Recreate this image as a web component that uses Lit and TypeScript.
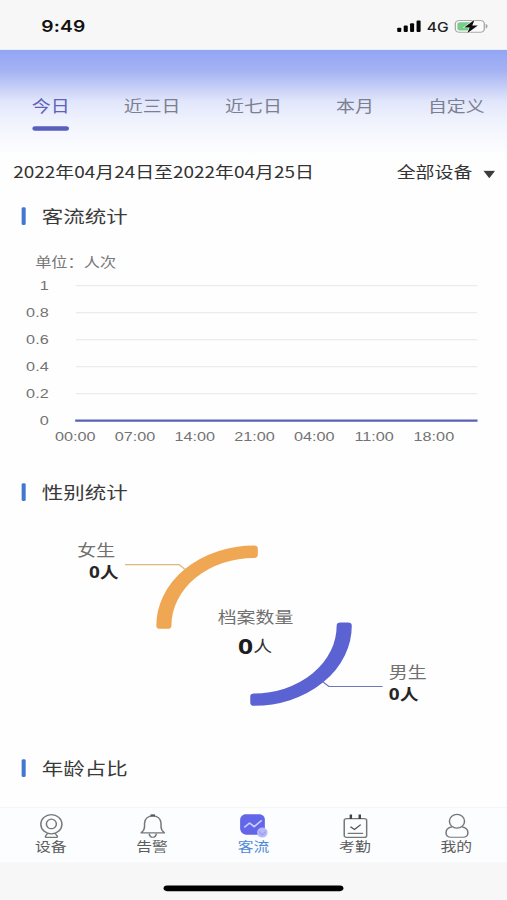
import { LitElement, html, svg, css } from "lit";
import { customElement, property } from "lit/decorators.js";
import { classMap } from "lit/directives/class-map.js";

@customElement("status-bar")
class StatusBar extends LitElement {
  static styles = css`
    :host { display: flex; justify-content: space-between; height: 44.6px; background: #f7f7f7; color: #111; }
    .time { padding: 15px 0 0 30.6px; font: 600 14.2px/18px Inter, sans-serif; letter-spacing: 0.1px; }
    .right { display: block; width: 85px; height: 44px; }
    .net { font: 500 12px Inter, sans-serif; fill: #222; }
  `;
  render() {
    return html`
      <div class="time">9:49</div>
      <svg class="right" viewBox="290 0 85 44">
        <g fill="#050505">
          <rect x="293.8" y="25" width="3" height="3.8" rx=".8" />
          <rect x="298.6" y="23" width="3" height="5.8" rx=".8" />
          <rect x="303.3" y="21" width="3" height="7.8" rx=".8" />
          <rect x="308.1" y="18.6" width="3" height="10.2" rx=".8" />
        </g>
        <text class="net" x="315.6" y="28.6" textLength="16.2" lengthAdjust="spacingAndGlyphs">4G</text>
        <rect x="336.8" y="18.5" width="21.4" height="10.6" rx="3" fill="#fbfbfb" stroke="#a9aba9" />
        <rect x="338.3" y="20" width="11" height="7.6" rx="1.6" fill="#75cf89" />
        <path d="M359.6 22 q1.6 1.6 0 3.4z" fill="#a0a0a0" stroke="#a0a0a0" stroke-width=".7" />
        <path d="M351 17.8 343.4 24.7h4l-1.8 5.4 7.8-7.2h-4.1z" fill="#111" stroke="#f4faf4" stroke-width=".9" paint-order="stroke" />
      </svg>
    `;
  }
}

@customElement("section-title")
class SectionTitle extends LitElement {
  @property() text = "";
  static styles = css`
    :host { display: flex; align-items: center; height: 24px; padding-left: 15.6px; gap: 12.3px; }
    .mark { width: 3px; height: 16px; margin-top: 1px; border-radius: 1.2px; background: #4478d0; }
    .label { font-size: 15.9px; line-height: 24px; color: #3a3a3a; }
  `;
  render() {
    return html`<span class="mark"></span><span class="label">${this.text}</span>`;
  }
}

@customElement("flow-chart")
class FlowChart extends LitElement {
  static styles = css`
    :host { display: block; }
    svg { display: block; }
    .axis { font: 12px "Liberation Sans", sans-serif; fill: #737373; }
    .unit { font: 12px "Noto Sans CJK SC", sans-serif; fill: #777; }
  `;
  render() {
    const levels = ["1", "0.8", "0.6", "0.4", "0.2", "0"];
    const hours = ["00:00", "07:00", "14:00", "21:00", "04:00", "11:00", "18:00"];
    return html`
      <svg width="375" height="225" viewBox="0 207 375 225">
        <text class="unit" x="26" y="240.9">单位：人次</text>
        ${levels.map((t, i) => svg`
          <text class="axis" text-anchor="end" x="36" y=${261.8 + i * 24.36}>${t}</text>
          <line x1="56" x2="353" y1=${257.8 + i * 24.36} y2=${257.8 + i * 24.36} stroke="#e6e6e6" />
        `)}
        <line x1="55.6" x2="353.2" y1="379.5" y2="379.5" stroke="#5a61b8" stroke-width="2" />
        ${hours.map((t, i) => svg`
          <text class="axis" text-anchor="middle" x=${55.7 + i * 44.2} y="397.8">${t}</text>
        `)}
      </svg>
    `;
  }
}

@customElement("gender-chart")
class GenderChart extends LitElement {
  static styles = css`
    :host { display: block; }
    svg { display: block; font-family: "Noto Sans CJK SC", sans-serif; }
    .name { font-size: 14px; fill: #707070; }
    .count { font-size: 14px; font-weight: 700; fill: #262626; }
    .total { font-family: "Open Sans", "Noto Sans CJK SC", sans-serif; font-size: 19.5px; font-weight: 700; fill: #1c1c1c; }
    .suffix { font-size: 14px; fill: #333; }
    .num { font-family: "Open Sans", sans-serif; }
  `;
  render() {
    return html`
      <svg width="375" height="225" viewBox="0 456 375 225">
        <path d="M118.4 564.5A69.5 69.5 0 0 1 187.9 495V500.6A63.9 63.9 0 0 0 124 564.5Z" fill="#f0a754" stroke="#f0a754" stroke-width="5.6" stroke-linejoin="round" />
        <path d="M257.4 564.5A69.5 69.5 0 0 1 187.9 634V628.4A63.9 63.9 0 0 0 251.8 564.5Z" fill="#5b63d3" stroke="#5b63d3" stroke-width="5.6" stroke-linejoin="round" />
        <path d="M92.5 509.4H132.5L137 514" fill="none" stroke="#ddb67c" />
        <path d="M238.6 615L243.2 619.4H283" fill="none" stroke="#7276bd" />
        <text class="name" x="57.2" y="501.6">女生</text>
        <text class="count" x="65.8" y="521.9"><tspan class="num">0</tspan>人</text>
        <text class="name" x="161" y="562">档案数量</text>
        <text class="total" x="176" y="590.4">0</text>
        <text class="suffix" x="187.4" y="588.4">人</text>
        <text class="name" x="287.6" y="611.8">男生</text>
        <text class="count" x="287.6" y="632"><tspan class="num">0</tspan>人</text>
      </svg>
    `;
  }
}

const icons: Record<string, unknown> = {
  device: svg`
    <ellipse cx="10" cy="9.6" rx="7.8" ry="8.7" /><ellipse cx="10" cy="9.4" rx="3.7" ry="4.3" />
    <path d="M7.3 17.8 5.6 20.4Q5.3 21.5 6.4 21.5H13.6Q14.8 21.5 14.4 20.4L12.7 17.8" />`,
  alarm: svg`
    <path d="M1.4 17.4Q3.9 15.2 3.9 12V8.8C3.9 4.6 6.6 2.2 10 2.2S16.1 4.6 16.1 8.8V12Q16.1 15.2 18.6 17.4Z" stroke-linejoin="round" />
    <path d="M8.4 1.7H11.6" stroke-width="1.9" stroke="#555" /><path d="M7.3 18.1Q7.8 21.4 10 21.4T12.7 18.1" />`,
  flow: svg`
    <path d="M4 .6H13.4C16.4.6 17.9 2.8 17.9 5.6V13.5C17.9 17 16.4 19.1 13.7 19.1H5C1.7 19.1-.4 16.6-.4 13V6.1C-.4 2.8 1.3.6 4 .6Z" fill="#6366e8" stroke="none" />
    <path d="M3 12.2 6.6 8.5 10 11.8 15.2 6.6" stroke="#c9ceff" stroke-width="1.3" stroke-linecap="round" stroke-linejoin="round" />
    <ellipse cx="16" cy="17.2" rx="3.9" ry="4.5" fill="#b8b9f8" stroke="none" />
    <path d="M13.7 15.3 16 18.3 18.4 15.3V18L16 20.3 13.7 18Z" fill="#a0a2f3" stroke="none" />`,
  attend: svg`
    <rect x="1.6" y="4.5" width="16.6" height="17" rx="1.8" />
    <path d="M6.5.8V5M13.1.8V5" stroke-width="1.8" stroke="#444" />
    <path d="M6.2 12 9.2 14.4 13.8 10" stroke="#555" /><path d="M4.2 17.9H15.6" />`,
  mine: svg`
    <ellipse cx="10" cy="7" rx="5.6" ry="6.2" />
    <path d="M6.3 12.1C3.3 12.8 1.9 15 1.9 17.3 1.9 20 3.5 21.4 5.8 21.4H14.2C16.5 21.4 18.1 20 18.1 17.3 18.1 15 16.7 12.8 13.7 12.1" />`,
};

@customElement("tab-bar")
class TabBar extends LitElement {
  static styles = css`
    :host { display: flex; height: 50px; box-sizing: border-box; border-top: 1px solid #f3f5f7; background: #fbfdff; }
    .tab { flex: 1; display: flex; flex-direction: column; align-items: center; padding-top: 4.6px; color: #5c5c5c; }
    .tab.on { color: #5088d5; }
    .icon { display: block; width: 20px; height: 23px; overflow: visible; stroke: #777; stroke-width: 1.1; fill: none; }
    .label { font-size: 11.7px; line-height: 16px; margin-top: -1.4px; }
  `;
  render() {
    const tabs = [["device", "设备"], ["alarm", "告警"], ["flow", "客流"], ["attend", "考勤"], ["mine", "我的"]];
    return tabs.map(([id, label]) => html`
      <div class=${classMap({ tab: true, on: id === "flow" })}>
        <svg class="icon" viewBox="0 0 20 23">${icons[id]}</svg>
        <span class="label">${label}</span>
      </div>
    `);
  }
}

@customElement("app-root")
class AppRoot extends LitElement {
  static styles = css`
    :host { display: block; width: 507px; height: 900px; overflow: hidden; background: #fff; }
    .screen {
      width: 375px; height: 812px; display: flex; flex-direction: column;
      transform: scale(1.352, 1.10837); transform-origin: 0 0;
      font-family: "Noto Sans CJK SC", sans-serif; background: #fefefe;
    }
    .ranges {
      display: flex; height: 95.4px;
      background: linear-gradient(#92a5f4 0, #a5b3f3 20%, #c6cff6 36%, #e1e6fb 49%, #f0f3fd 68%, #fafbff 90%, #fefefe 100%);
    }
    .range { flex: 1; display: flex; flex-direction: column; align-items: center; gap: 9px; padding-top: 40.8px; font-size: 14px; line-height: 20px; color: #7c7f91; }
    .range.on { color: #5e62b8; }
    .range.on::after { content: ""; width: 27px; height: 4px; border-radius: 2px; background: #5a5ebc; }
    .filter { display: flex; justify-content: space-between; height: 31px; padding: 4.8px 8.6px 0 9.8px; box-sizing: border-box; font-size: 14px; line-height: 20px; color: #333; }
    .device { display: flex; gap: 8px; }
    .caret { width: 9px; height: 7px; margin-top: 9px; background: #3c3c3c; clip-path: polygon(0 0, 100% 0, 50% 100%); }
    .body { flex: 1; padding-top: 12px; overflow: hidden; }
    .home { height: 34px; display: flex; justify-content: center; background: #f7f7f7; }
    .home span { width: 133.4px; height: 5px; margin-top: 21px; border-radius: 3px; background: #000; }
  `;
  render() {
    const ranges = ["今日", "近三日", "近七日", "本月", "自定义"];
    return html`
      <div class="screen">
        <status-bar></status-bar>
        <div class="ranges">
          ${ranges.map((r, i) => html`<div class=${classMap({ range: true, on: i === 0 })}>${r}</div>`)}
        </div>
        <div class="filter">
          <span>2022年04月24日至2022年04月25日</span>
          <span class="device">全部设备<span class="caret"></span></span>
        </div>
        <div class="body">
          <section-title text="客流统计"></section-title>
          <flow-chart></flow-chart>
          <section-title text="性别统计"></section-title>
          <gender-chart></gender-chart>
          <section-title text="年龄占比"></section-title>
        </div>
        <tab-bar></tab-bar>
        <div class="home"><span></span></div>
      </div>
    `;
  }
}
